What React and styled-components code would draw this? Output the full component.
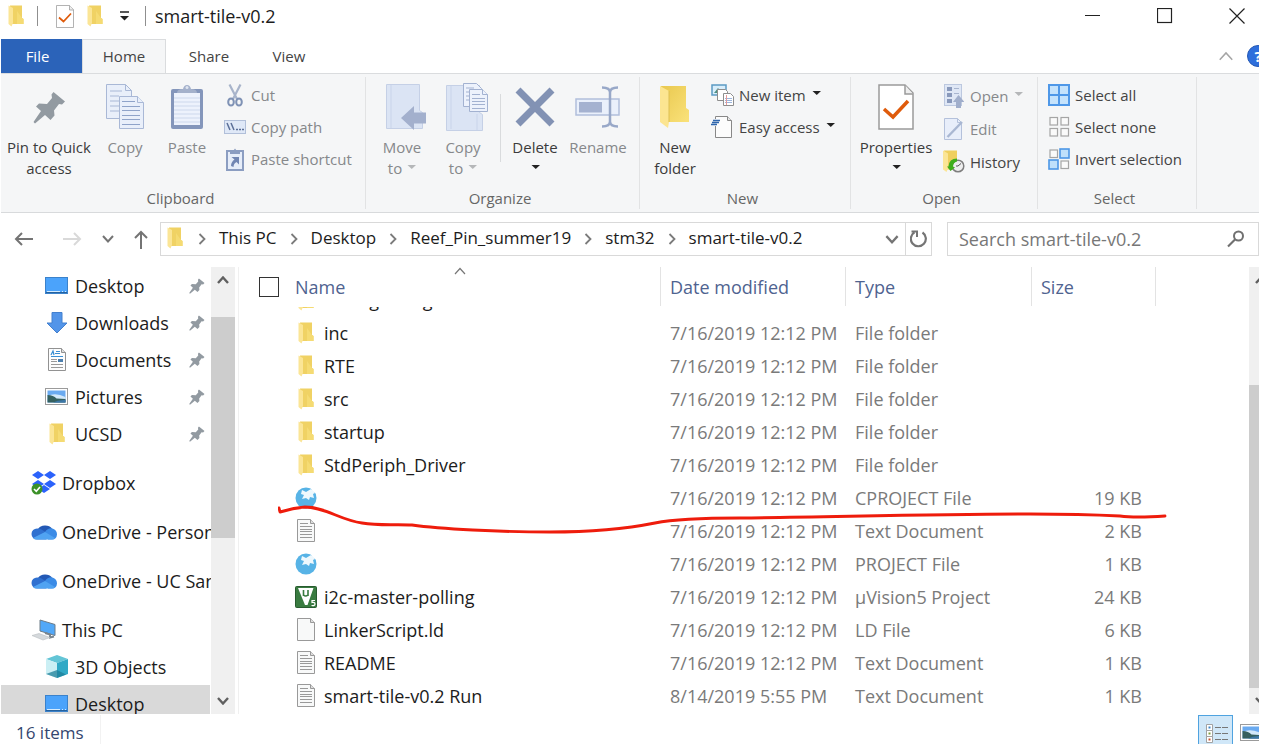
import React from 'react';
import styled, { createGlobalStyle, css } from 'styled-components';

const GlobalStyle = createGlobalStyle`
  *, *::before, *::after { box-sizing: border-box; }
  body { margin: 0; background: #fff; }
  body, button, input { font-family: "Open Sans", "Noto Sans", sans-serif; }
  button { border: 0; padding: 0; background: none; color: inherit; font-size: inherit; }
  svg { display: block; flex: none; }
`;

const dim = '#86888b';

/* ---------- window frame ---------- */

const Window = styled.div`
  display: flex;
  flex-direction: column;
  height: 100vh;
  padding: 0 4px 0 1px;
  overflow: hidden;
  font-size: 18px;
  color: #1c1c1c;
`;

const TitleBar = styled.header`
  display: flex;
  align-items: center;
  flex: none;
  height: 39px;
  padding: 0 14px 7px 7px;
`;

const QuickTools = styled.div`
  display: flex;
  align-items: center;
  gap: 13px;
`;

const QuickDivider = styled.span`
  width: 1px;
  height: 20px;
  margin-right: ${(p) => (p.$wide ? 5 : 0)}px;
  background: #8f8f8f;
`;

const Title = styled.h1`
  flex: 1;
  margin: 0 0 0 9px;
  font-size: 18px;
  line-height: 24px;
  font-weight: 400;
`;

const WindowControls = styled.div`
  display: flex;
  gap: 56px;
`;

const TabBar = styled.nav`
  display: flex;
  flex: none;
  height: 35px;
  border-bottom: 1px solid #dadcde;
  overflow: hidden;
`;

const Tab = styled.button`
  width: ${(p) => p.$width}px;
  height: 35px;
  padding-bottom: 2px;
  font-size: 15px;
  line-height: 32px;
  color: #444;
  ${(p) => p.$file && css`
    padding-right: 8px;
    background: #2b63b9;
    color: #fff;
  `}
  ${(p) => p.$active && css`
    background: #f5f6f7;
    border: 1px solid #dadcde;
    border-bottom: 0;
  `}
`;

const TabTools = styled.div`
  display: flex;
  align-items: center;
  gap: 13px;
  margin-left: auto;
  width: 41px;
  overflow: hidden;
`;

const HelpButton = styled.button`
  flex: none;
  width: 22px;
  height: 22px;
  border-radius: 50%;
  border: 1px solid #2458b4;
  background: #2f6fdc;
  color: #fff;
  font-size: 15px;
  line-height: 20px;
  font-weight: 700;
`;

/* ---------- ribbon ---------- */

const Ribbon = styled.div`
  display: flex;
  flex: none;
  height: 139px;
  padding: 3px 0;
  background: #f5f6f7;
  border-bottom: 1px solid #d8dadc;
  font-size: 15px;
  color: #444;
`;

const Group = styled.section`
  display: flex;
  flex-direction: column;
  flex: none;
  width: ${(p) => p.$width}px;
  border-right: 1px solid #e2e3e4;
`;

const GroupBody = styled.div`
  display: flex;
  flex: 1;
`;

const GroupLabel = styled.h2`
  margin: 0;
  padding-right: 5px;
  font-size: 15px;
  font-weight: 400;
  line-height: 22px;
  text-align: center;
  color: #666;
`;

const LargeButton = styled.button`
  display: flex;
  flex-direction: column;
  align-items: center;
  flex: none;
  width: ${(p) => p.$width}px;
  padding-top: 5px;
  line-height: 21px;
  white-space: nowrap;
  color: ${(p) => (p.$dim ? dim : '#3b3b3b')};
`;

const LargeIcon = styled.span`
  display: flex;
  align-items: center;
  height: 50px;
  margin-bottom: 5px;
`;

const LabelLine = styled.span`
  display: flex;
  align-items: center;
  gap: 4px;
  height: 21px;
`;

const SmallColumn = styled.div`
  display: flex;
  flex-direction: column;
  padding: 2px 0 0 ${(p) => p.$inset}px;
`;

const SmallButton = styled.button`
  display: flex;
  align-items: center;
  gap: 5px;
  height: ${(p) => p.$height || 32}px;
  line-height: 20px;
  white-space: nowrap;
  color: ${(p) => (p.$dim ? dim : '#444')};
`;

const SmallIcon = styled.span`
  display: flex;
  justify-content: center;
  width: ${(p) => p.$width || 22}px;
`;

const BodyDivider = styled.span`
  width: 1px;
  height: 68px;
  margin: 17px 0 0 12px;
  background: #d9dbdd;
`;

/* ---------- address row ---------- */

const AddressRow = styled.div`
  display: flex;
  align-items: center;
  flex: none;
  height: 54px;
  padding-bottom: 2px;
`;

const NavButtons = styled.div`
  display: flex;
  align-items: center;
  gap: 20px;
  width: 134px;
  margin: 0 12px 0 13px;
`;

const NavButton = styled.button`
  margin-left: ${(p) => (p.$apart ? 8 : 0)}px;
`;

const AddressBox = styled.div`
  display: flex;
  flex: 1;
  height: 34px;
  border: 1px solid #d9d9d9;
`;

const Crumbs = styled.div`
  display: flex;
  align-items: center;
  flex: 1;
  padding: 0 5px 2px 6px;
  white-space: nowrap;
`;

const CrumbFolder = styled.span`
  width: 18px;
`;

const Crumb = styled.button`
  font-size: 17px;
  line-height: 24px;
`;

const CrumbArrow = styled.span`
  display: flex;
  justify-content: center;
  width: 34px;
  padding-top: 2px;
`;

const AddressButton = styled.button`
  display: flex;
  align-items: center;
  justify-content: center;
  width: 26px;
  border-left: ${(p) => (p.$divided ? '1px solid #d9d9d9' : '0')};
`;

const SearchBox = styled.label`
  display: flex;
  align-items: center;
  width: 312px;
  height: 34px;
  margin-left: 15px;
  padding: 0 13px 0 11px;
  border: 1px solid #d9d9d9;
`;

const SearchInput = styled.input`
  flex: 1;
  min-width: 0;
  padding: 0;
  border: 0;
  outline: 0;
  font-size: 18px;
  &::placeholder { color: #777; opacity: 1; }
`;

/* ---------- navigation pane ---------- */

const Body = styled.div`
  display: flex;
  flex: 1;
  min-height: 0;
`;

const Sidebar = styled.aside`
  display: flex;
  flex: none;
  width: 238px;
  border-right: 1px solid #f0f0f0;
`;

const Tree = styled.ul`
  width: 210px;
  margin: 0;
  padding: 0 1px 0 0;
  list-style: none;
  overflow: hidden;
`;

const TreeRow = styled.li`
  display: flex;
  align-items: center;
  height: 37px;
  margin-top: ${(p) => (p.$spaced ? 12 : 0)}px;
  padding-left: ${(p) => (p.$nested ? 44 : 30)}px;
  padding-right: 5px;
  background: ${(p) => (p.$selected ? '#d9d9d9' : 'transparent')};
`;

const TreeIcon = styled.span`
  display: flex;
  justify-content: center;
  width: ${(p) => (p.$nested ? 23 : 26)}px;
`;

const TreeLabel = styled.a`
  flex: 1;
  margin-left: ${(p) => (p.$nested ? 7 : 5)}px;
  font-size: 18px;
  line-height: 24px;
  color: inherit;
  text-decoration: none;
  white-space: nowrap;
`;

const ScrollTrack = styled.div`
  display: flex;
  flex-direction: column;
  flex: none;
  width: ${(p) => p.$width}px;
  background: #f0f0f0;
  overflow: hidden;
`;

const ScrollButton = styled.button`
  display: flex;
  align-items: center;
  justify-content: center;
  flex: none;
  width: 24px;
  height: 26px;
`;

const ScrollThumb = styled.div`
  flex: ${(p) => p.$size} 0 0;
  background: #cdcdcd;
`;

const ScrollSpace = styled.div`
  flex: ${(p) => p.$size} 0 0;
`;

/* ---------- file list ---------- */

const FilePane = styled.main`
  position: relative;
  display: flex;
  flex: 1;
  min-width: 0;
`;

const FileTable = styled.table`
  display: flex;
  flex-direction: column;
  flex: 1;
  min-width: 0;
`;

const columns = css`
  display: grid;
  grid-template-columns: minmax(0, 1fr) 185px 186px 124px 93px;
`;

const HeadRow = styled.tr`
  ${columns}
  height: 40px;
`;

const HeadCell = styled.th`
  position: relative;
  display: flex;
  align-items: center;
  gap: 16px;
  height: 39px;
  padding: 1px 0 0 ${(p) => (p.$name ? 20 : 9)}px;
  border-right: 1px solid #e3e3e3;
  font-size: 18px;
  font-weight: 400;
  color: #4f6390;
`;

const CheckAll = styled.input`
  appearance: none;
  width: 20px;
  height: 20px;
  margin: 0;
  border: 1px solid #333;
  background: #fff;
`;

const SortMark = styled.span`
  position: absolute;
  top: 0;
  left: 51%;
`;

const FileRows = styled.tbody`
  display: flex;
  flex-direction: column;
  justify-content: flex-end;
  flex: 1;
  min-height: 0;
  padding-bottom: 1px;
  overflow: hidden;
`;

const FileRow = styled.tr`
  ${columns}
  flex: none;
  height: 33px;
`;

const Cell = styled.td`
  padding: 0 ${(p) => (p.$right ? 14 : 0)}px 0 9px;
  font-size: 18px;
  line-height: 33px;
  color: #7a7a7a;
  text-align: ${(p) => (p.$right ? 'right' : 'left')};
  white-space: nowrap;
`;

const NameCell = styled.td`
  display: flex;
  align-items: center;
  gap: 7px;
  padding: 0 0 0 56px;
  font-size: 18px;
  line-height: 33px;
  white-space: nowrap;
`;

const FileIcon = styled.span`
  display: flex;
  justify-content: center;
  width: 22px;
  padding-bottom: 2px;
`;

const PenStroke = styled.svg`
  position: absolute;
  top: 233px;
  left: 39px;
  pointer-events: none;
`;

/* ---------- status bar ---------- */

const StatusBar = styled.footer`
  display: flex;
  flex: none;
  height: 30px;
  padding: 1px 0 0 15px;
  overflow: hidden;
`;

const ItemCount = styled.span`
  width: 85px;
  height: 34px;
  border-right: 1px solid #f2f2f2;
  font-size: 17px;
  line-height: 35px;
  color: #34466f;
`;

const ViewButtons = styled.div`
  display: flex;
  margin-left: auto;
  width: 61px;
  overflow: hidden;
`;

const ViewButton = styled.button`
  flex: none;
  width: 35px;
  height: 35px;
  padding: 6px;
  border: 1px solid ${(p) => (p.$on ? '#4fa3e0' : 'transparent')};
  background: ${(p) => (p.$on ? '#d0e7f8' : 'transparent')};
`;

/* ---------- icons ---------- */

const Folder = ({ w = 16, h = 22 }) => (
  <svg width={w} height={h} viewBox="0 0 16 22">
    <path d="M2 0.5h12v12.500l1.500 1v5H3z" fill="#f0d264" />
    <path d="M14 13l1.500 1v5H9V6z" fill="#f5db73" />
    <path d="M0.500 0.500L5 3v15l-1.500 3.500L0.500 19z" fill="#fbe596" />
  </svg>
);

const BigFolder = () => (
  <svg width="32" height="44" viewBox="0 0 32 44">
    <defs>
      <linearGradient id="bigFolder" x1="0" y1="0" x2="1" y2="1">
        <stop offset="0" stopColor="#e9c84f" />
        <stop offset="1" stopColor="#fae27a" />
      </linearGradient>
    </defs>
    <path d="M2 1h25v22l3 2v12H8z" fill="url(#bigFolder)" />
    <path d="M1 1l9 5v31l-1 6-8-6z" fill="#fce591" />
    <path d="M10 6v31" stroke="#dfc052" />
  </svg>
);

const Pin = ({ size = 33, color = '#929aa1' }) => (
  <svg width={size} height={size} viewBox="0 0 33 33">
    <path d="M20.500 1L32 10.500 29 13.500l-3-.5-5 6.500.5 5-4 4.500-5.500-5L2 32.500.5 31 8 20l-5-4.500L6 12.500l8 .5 5-6-.5-3.500z" fill={color} />
  </svg>
);

const Caret = ({ color = '#222' }) => (
  <svg width="10" height="8" viewBox="0 0 10 8"><path d="M1.500 0h8.500L5.750 4z" fill={color} /></svg>
);

const Chevron = ({ w = 12, h = 8, dir = 'down', color = '#606060', stroke = 2 }) => {
  const paths = { down: 'M1 1l5 5.500 5-5.500', up: 'M1 7l5-5.500L11 7' };
  return (
    <svg width={w} height={h} viewBox="0 0 12 8">
      <path d={paths[dir]} fill="none" stroke={color} strokeWidth={stroke} />
    </svg>
  );
};

const RightChevron = () => (
  <svg width="8" height="12" viewBox="0 0 8 12">
    <path d="M1.500 1l5 5-5 5" fill="none" stroke="#7b7b7b" strokeWidth="1.800" />
  </svg>
);

const CheckDoc = ({ w, h }) => (
  <svg width={w} height={h} viewBox="0 0 36 46">
    <path d="M1 1h26l8 8v36H1z" fill="#fff" stroke="#9a9a9a" strokeWidth="1.500" />
    <path d="M27 1v9h8" fill="#eee" stroke="#9a9a9a" strokeWidth="1.500" />
    <path d="M6 25l9 8 15-16" fill="none" stroke="#df5b0b" strokeWidth="3.500" />
  </svg>
);

const CopyIcon = () => (
  <svg width="38" height="46" viewBox="0 0 38 46" fill="#e9effa" stroke="#a9b8d6">
    <path d="M.5.5h19l6 6v28H.5z" />
    <path d="M19.500.5v6h6M4 7h12M4 12h9M4 17h9M4 22h9M4 27h9" fill="none" />
    <path d="M13.500 12.500h18l6 6v26h-24z" />
    <path d="M31.500 12.500v6h6" />
    <path d="M16 17.500h13M16 22.500h18M16 26.500h18M16 31.500h18M16 35.500h18M16 40.500h18" stroke="#8fa3c9" />
  </svg>
);

const PasteIcon = () => (
  <svg width="34" height="46" viewBox="0 0 34 46">
    <rect x="1" y="5" width="32" height="40" rx="2" fill="#8496bb" />
    <rect x="4" y="9" width="26" height="32" fill="#edf2fc" />
    <path d="M4 14h26M4 18h26M4 22h26M4 26h26M4 30h26M4 34h26M4 38h26" stroke="#cdd8ec" />
    <path d="M7 9q0-4 6-4 1-4 4-4t4 4q6 0 6 4z" fill="#a4b1cb" />
    <circle cx="17" cy="3.500" r="1.500" fill="#dfe5f0" />
  </svg>
);

const CutIcon = () => (
  <svg width="16" height="23" viewBox="0 0 16 23" fill="none">
    <path d="M2.500.5L10 15M13.500.5L6 15" stroke="#a8b4ca" strokeWidth="2.200" />
    <ellipse cx="4" cy="18" rx="2.800" ry="3.600" stroke="#7f92b5" strokeWidth="2" />
    <ellipse cx="12" cy="18" rx="2.800" ry="3.600" stroke="#7f92b5" strokeWidth="2" />
  </svg>
);

const CopyPathIcon = () => (
  <svg width="22" height="14" viewBox="0 0 22 14">
    <rect x=".5" y=".5" width="21" height="13" fill="#dfe8f7" stroke="#b1bfd9" />
    <path d="M3 3l3 7M7 3l3 7" stroke="#5b6f98" strokeWidth="1.500" />
    <path d="M12 9.500h2M15 9.500h2M18 9.500h2" stroke="#5b6f98" strokeWidth="1.500" />
  </svg>
);

const PasteShortcutIcon = () => (
  <svg width="18" height="23" viewBox="0 0 18 23">
    <rect x="1" y="3" width="16" height="19" fill="#e6edf9" stroke="#8b9dc1" strokeWidth="2" />
    <path d="M4 6V3l3.500-.5L9 .5l1.500 2 3.500.5v3z" fill="#8b9dc1" />
    <path d="M5.500 9h7.500v7.500l-2.500-2.500q-3 1.500-3 5l-2.500-1q0-4 3.500-6.500z" fill="#7186b3" />
  </svg>
);

const MoveIcon = () => (
  <svg width="48" height="46" viewBox="-8 0 48 46">
    <path d="M.5.5h33v26l3 2v16H.5z" fill="#dbe4f4" stroke="#c5d0e6" />
    <path d="M5 1v43" stroke="#c9d4ea" />
    <path d="M40 28.500v11H28V46L15 34l13-12v6.500z" fill="#a3b0cd" />
  </svg>
);

const CopyToIcon = () => (
  <svg width="50" height="48" viewBox="-8 0 50 48">
    <path d="M.5 2.500h33v27l3 2v16H.5z" fill="#dbe4f4" stroke="#c5d0e6" />
    <path d="M5 3v43M31 31v16" stroke="#c9d4ea" />
    <g fill="#edf2fc" stroke="#a3b2d1">
      <path d="M17.500.5h13l5 5v18h-18z" />
      <path d="M20 5h8M20 9h4M20 13h4M20 17h4" />
      <path d="M23.500 6.500h13l5 5v17h-18z" />
      <path d="M36.500 6.500v5h5M26 11.500h8M26 15.500h13M26 18.500h13M26 21.500h13M26 25.500h13" />
    </g>
  </svg>
);

const DeleteIcon = () => (
  <svg width="40" height="40" viewBox="0 0 40 40">
    <path d="M3 3l34 34M37 3L3 37" stroke="#8292b4" strokeWidth="7" />
  </svg>
);

const RenameIcon = () => (
  <svg width="46" height="42" viewBox="0 0 46 42" fill="none">
    <rect x="1" y="13" width="43" height="16" fill="#eaf0fb" stroke="#b1bfdb" strokeWidth="1.500" />
    <rect x="4" y="16" width="23" height="10.500" fill="#a5b2d0" />
    <path d="M35 5v32M27 1.500q8 0 8 5 0-5 8-5M27 40.500q8 0 8-5 0 5 8 5" stroke="#98a8c8" strokeWidth="2.500" />
  </svg>
);

const NewItemIcon = () => (
  <svg width="23" height="22" viewBox="0 0 23 22">
    <rect x="1" y="1" width="14" height="10" fill="#d9eefb" stroke="#5b9ac4" strokeWidth="1.500" />
    <path d="M3 9l4-5 4 5z" fill="#4d9183" />
    <path d="M6.500 5.500h8l2 2v9h-10z" fill="#fff" stroke="#8e8e8e" />
    <path d="M12.500 9.500h7l3 3v9h-10z" fill="#fff" stroke="#8e8e8e" />
    <path d="M14 14.500h7M14 16.500h7M14 18.500h7" stroke="#9db6dd" />
    <path d="M15.500 11v10" stroke="#e59a9a" />
  </svg>
);

const EasyAccessIcon = () => (
  <svg width="23" height="22" viewBox="0 0 23 22">
    <path d="M4.500.5h12l4 4v17h-16z" fill="#fcfcfc" stroke="#888" />
    <path d="M16.500.5v4h4" fill="#e6e6e6" stroke="#888" />
    <path d="M4 3v7" stroke="#f5f6f7" strokeWidth="2" />
    <path d="M2 4.500h7M1 6.500h7M0 8.500h6" stroke="#2f66ad" strokeWidth="1.400" />
  </svg>
);

const OpenIcon = () => (
  <svg width="20" height="24" viewBox="0 0 20 24">
    <rect x=".5" y=".5" width="17" height="21" fill="#dfe7f5" stroke="#bcc8df" />
    <path d="M3 3h5v4H3zM3 9h5v4H3zM3 15h5v4H3z" fill="#8999bb" />
    <path d="M10 4.500h5M10 9.500h5" stroke="#a8b5cf" />
    <path d="M14.500 11l6 7H17v6h-5v-6H9z" fill="#a0aecb" />
  </svg>
);

const EditIcon = () => (
  <svg width="20" height="22" viewBox="0 0 20 22">
    <path d="M.5.5h13l4 4v17H.5z" fill="#e8eefa" stroke="#b4c1db" />
    <path d="M13.500.5v4h4" fill="none" stroke="#b4c1db" />
    <path d="M3.500 19L18 4" stroke="#a9b7d2" strokeWidth="2.400" />
  </svg>
);

const HistoryIcon = () => (
  <svg width="22" height="23" viewBox="0 0 22 23">
    <path d="M1 .5h13v19H4z" fill="#efcf5f" />
    <path d="M0 .5l5 3v15L3.500 22 0 19.500z" fill="#fbe596" />
    <circle cx="15" cy="16" r="5.800" fill="#eee" stroke="#7e7e7e" strokeWidth="1.500" />
    <path d="M15 16l3-2.500M15 16h-2" stroke="#555" />
    <path d="M14 8.500q-8 0-8.500 8H4l3.500 4.500 4.500-3.500-2-1q0-4 4-5z" fill="#3fae1b" />
  </svg>
);

const Tile = ({ x, y, on, s = 8 }) => (
  <rect x={x} y={y} width={s} height={s} fill={on ? '#bfe0fb' : '#fafafa'} stroke={on ? '#4d97e6' : '#a5a5a5'} strokeWidth={on ? 1.6 : 1.2} />
);

const SelectAllIcon = () => (
  <svg width="22" height="22" viewBox="0 0 22 22">
    <rect width="22" height="22" fill="#4f98e8" />
    <path d="M2 2h8v8H2zM12 2h8v8h-8zM2 12h8v8H2zM12 12h8v8h-8z" fill="#c5e3fc" />
  </svg>
);

const SelectNoneIcon = () => (
  <svg width="22" height="22" viewBox="0 0 22 22">
    <Tile x={2} y={1.5} s={7.5} /><Tile x={13} y={1.5} s={7.5} />
    <Tile x={2} y={12.5} s={7.5} /><Tile x={13} y={12.5} s={7.5} />
  </svg>
);

const InvertIcon = () => (
  <svg width="22" height="22" viewBox="0 0 22 22">
    <Tile x={2} y={2} s={7.5} /><Tile x={12} y={1} on s={9} />
    <Tile x={1} y={12} on s={9} /><Tile x={13} y={13} s={7.5} />
  </svg>
);

const DesktopIcon = () => (
  <svg width="23" height="17" viewBox="0 0 23 17">
    <rect x=".5" y=".5" width="22" height="16" fill="#4ba3fb" stroke="#3b82cb" />
    <path d="M2 14.500h13M17 14.500h1M20 14.500h1" stroke="#d5ecff" />
    <path d="M1 15.500h21" stroke="#26629e" />
  </svg>
);

const DownloadIcon = () => (
  <svg width="22" height="22" viewBox="0 0 22 22">
    <path d="M6 .5h10V11h5L11 21 1 11h5z" fill="#5395e9" stroke="#4380cf" />
  </svg>
);

const DocumentsIcon = () => (
  <svg width="18" height="23" viewBox="0 0 18 23">
    <path d="M.5.5h13l4 4v18H.5z" fill="#fdfdfd" stroke="#929292" />
    <path d="M13.500.5v4h4" fill="#ddd" stroke="#929292" />
    <path d="M3 7l2-4 1 4M8 3.500h4M7 5.500h5M3 8.500h12" fill="none" stroke="#3a8fd4" strokeWidth="1.200" />
    <path d="M3 11.500h6M3 13.500h6M3 16.500h12M3 19.500h12" stroke="#999" />
    <path d="M10 11h5v3h-5z" fill="#4c7fae" />
  </svg>
);

const PictureIcon = () => (
  <svg width="23" height="17" viewBox="0 0 23 17">
    <rect x=".5" y=".5" width="22" height="16" fill="#fff" stroke="#9b9b9b" />
    <rect x="2.500" y="2.500" width="18" height="12" fill="#6aaaf0" />
    <path d="M2.500 8q8-4 18 1v2h-18z" fill="#d2e8fa" />
    <path d="M2.500 7q6 0 9 3.500l9 .5v3.500h-18z" fill="#35605f" />
    <path d="M8 14.500q5-3 12.500-2.500v2.500z" fill="#3c77a8" />
  </svg>
);

const DropboxIcon = () => (
  <svg width="26" height="24" viewBox="0 0 26 24">
    <path d="M7 0l6 4-6 4-6-4zM19 0l6 4-6 4-6-4zM7 9l6 4-6 4-6-4zM19 9l6 4-6 4-6-4zM13 14l6 4-6 4-6-4z" fill="#2b62fb" />
    <circle cx="6" cy="18" r="5.500" fill="#3c9128" />
    <path d="M3 18l2.300 2.300L9 16" fill="none" stroke="#fff" strokeWidth="1.600" />
  </svg>
);

const OneDriveIcon = () => (
  <svg width="26" height="17" viewBox="0 0 26 17">
    <path d="M7 6a8 6.500 0 0 1 14-.5L15 11z" fill="#2359b5" />
    <path d="M6 16.500A5.500 5.500 0 0 1 6 5.500q3 0 4.500 1L21 13l-6 3.500z" fill="#2f70d0" />
    <path d="M14 9q3-4.500 7.500-3.500Q26 7 26 11.500 25.500 16.500 21 16.500h-4z" fill="#3b8be6" />
    <path d="M2 15l12-6 10 6q-1 1.500-3 1.500H6q-2.500 0-4-1.500z" fill="#50a3f2" />
  </svg>
);

const ComputerIcon = () => (
  <svg width="26" height="22" viewBox="0 0 26 22">
    <path d="M9 1l15 4.500v11L9 12z" fill="#52a8f8" stroke="#6d7c88" />
    <path d="M14 14l5 1.500v3l4-1" fill="none" stroke="#79858e" strokeWidth="2" />
    <path d="M1 16.500l7-2 11 4-7 2.500z" fill="#d5d9dc" stroke="#b8bdc1" strokeWidth=".6" />
  </svg>
);

const CubeIcon = () => (
  <svg width="24" height="23" viewBox="0 0 24 23">
    <path d="M1 4l11-4 11 4-11 4z" fill="#63c5d6" />
    <path d="M1 4l11 4v15L1 19z" fill="#cbeff4" />
    <path d="M23 4L12 8v15l11-4z" fill="#31a9c6" />
    <path d="M12 15l-11 4 11 4 9-3.500z" fill="#1d7f98" opacity=".75" />
  </svg>
);

const GlobeIcon = () => (
  <svg width="22" height="22" viewBox="0 0 22 22">
    <circle cx="11" cy="11" r="10.500" fill="#57b3e6" />
    <path d="M7 3l4 2 5-3 4 4-2 1 1 4-4-1-1 3-3-2-4 1 2-4-3-1z" fill="#eef8fd" />
    <path d="M17 2l3 3" stroke="#fff" strokeWidth="2" />
  </svg>
);

const Sheet = ({ lined }) => (
  <svg width="18" height="23" viewBox="0 0 18 23">
    <path d="M.5.5h13l4 4v18H.5z" fill="#f8f9f9" stroke="#999" />
    <path d="M13.500.5v4h4" fill="#ddd" stroke="#999" />
    {lined && <path d="M3 4.500h8M3 7.500h12M3 10.500h12M3 12.500h12M3 15.500h12M3 18.500h12" stroke="#999" />}
  </svg>
);

const VisionIcon = () => (
  <svg width="22" height="22" viewBox="0 0 22 22">
    <rect x=".5" y=".5" width="21" height="21" rx="1" fill="#397b40" stroke="#285b2f" />
    <path d="M3 2h15.500L12.500 19h-2.500z" fill="#fff" />
    <path d="M8.500 4v6M8.500 9q2 2 4.500 0M13 4v6" fill="none" stroke="#397b40" strokeWidth="1.600" />
    <path d="M20 14.500h-3v2q3-.5 3 1.500t-3.500 1.500" fill="none" stroke="#fff" strokeWidth="1.200" />
  </svg>
);

const Arrow = ({ forward }) => (
  <svg width="20" height="14" viewBox="0 0 20 14">
    <path
      d={forward ? 'M1 7h17M12 1l6 6-6 6' : 'M19 7H2M8 1L2 7l6 6'}
      fill="none" stroke={forward ? '#d9d9d9' : '#747474'} strokeWidth="2"
    />
  </svg>
);

const UpArrow = () => (
  <svg width="14" height="19" viewBox="0 0 14 19">
    <path d="M7 19V2M1 8l6-6 6 6" fill="none" stroke="#747474" strokeWidth="2" />
  </svg>
);

const RefreshIcon = () => (
  <svg width="18" height="18" viewBox="0 0 18 18">
    <path d="M12.500 2.500a7.500 7.500 0 1 1-8-.2" fill="none" stroke="#757575" strokeWidth="2.200" />
    <path d="M1.500 1.500H7V7" fill="none" stroke="#757575" strokeWidth="2" />
  </svg>
);

const SearchIcon = () => (
  <svg width="18" height="18" viewBox="0 0 18 18">
    <circle cx="11.500" cy="6" r="4.500" fill="none" stroke="#707070" strokeWidth="2" />
    <path d="M8.500 9L1 16.500" stroke="#707070" strokeWidth="2.200" />
  </svg>
);

const DetailsIcon = () => (
  <svg width="24" height="22" viewBox="0 0 24 22">
    <path d="M1.500 2.500h6v6h-6zM1.500 8.500h6v6h-6zM1.500 14.500h6v6h-6z" fill="#fff" stroke="#a2a2a2" />
    <path d="M3.500 4.500h2v2h-2z" fill="#3a85c9" />
    <path d="M3.500 10.500h2v2h-2z" fill="#7d9a3a" />
    <path d="M3.500 16.500h2v2h-2z" fill="#c9502c" />
    <path d="M10 5.500h6M17 5.500h6M10 11.500h6M17 11.500h6M10 17.500h6M17 17.500h6" stroke="#777" />
  </svg>
);

/* ---------- data ---------- */

const tabs = [
  { label: 'File', width: 81, file: true },
  { label: 'Home', width: 84, active: true },
  { label: 'Share', width: 86 },
  { label: 'View', width: 74 },
];

const crumbs = ['This PC', 'Desktop', 'Reef_Pin_summer19', 'stm32', 'smart-tile-v0.2'];

const tree = [
  { label: 'Desktop', icon: <DesktopIcon />, nested: true, pinned: true },
  { label: 'Downloads', icon: <DownloadIcon />, nested: true, pinned: true },
  { label: 'Documents', icon: <DocumentsIcon />, nested: true, pinned: true },
  { label: 'Pictures', icon: <PictureIcon />, nested: true, pinned: true },
  { label: 'UCSD', icon: <Folder />, nested: true, pinned: true },
  { label: 'Dropbox', icon: <DropboxIcon />, spaced: true },
  { label: 'OneDrive - Personal', icon: <OneDriveIcon />, spaced: true },
  { label: 'OneDrive - UC San Diego', icon: <OneDriveIcon />, spaced: true },
  { label: 'This PC', icon: <ComputerIcon />, spaced: true },
  { label: '3D Objects', icon: <CubeIcon />, nested: true },
  { label: 'Desktop', icon: <DesktopIcon />, nested: true, selected: true },
];

const noon = '7/16/2019 12:12 PM';

const files = [
  { name: 'DebugConfig', icon: <Folder />, date: noon, type: 'File folder' },
  { name: 'inc', icon: <Folder />, date: noon, type: 'File folder' },
  { name: 'RTE', icon: <Folder />, date: noon, type: 'File folder' },
  { name: 'src', icon: <Folder />, date: noon, type: 'File folder' },
  { name: 'startup', icon: <Folder />, date: noon, type: 'File folder' },
  { name: 'StdPeriph_Driver', icon: <Folder />, date: noon, type: 'File folder' },
  { name: '', icon: <GlobeIcon />, date: noon, type: 'CPROJECT File', size: '19 KB' },
  { name: '', icon: <Sheet lined />, date: noon, type: 'Text Document', size: '2 KB' },
  { name: '', icon: <GlobeIcon />, date: noon, type: 'PROJECT File', size: '1 KB' },
  { name: 'i2c-master-polling', icon: <VisionIcon />, date: noon, type: 'µVision5 Project', size: '24 KB' },
  { name: 'LinkerScript.ld', icon: <Sheet />, date: noon, type: 'LD File', size: '6 KB' },
  { name: 'README', icon: <Sheet lined />, date: noon, type: 'Text Document', size: '1 KB' },
  { name: 'smart-tile-v0.2 Run', icon: <Sheet lined />, date: '8/14/2019 5:55 PM', type: 'Text Document', size: '1 KB' },
];

/* ---------- parts ---------- */

const Large = ({ icon, lines, width, dim: isDim, caret }) => (
  <LargeButton $width={width} $dim={isDim}>
    <LargeIcon>{icon}</LargeIcon>
    {lines.map((line, i) => (
      <LabelLine key={line || i}>
        {line}
        {caret && i === lines.length - 1 && <Caret color={isDim ? '#b5b7b9' : '#222'} />}
      </LabelLine>
    ))}
  </LargeButton>
);

const Small = ({ icon, label, dim: isDim, caret, height, iconWidth }) => (
  <SmallButton $dim={isDim} $height={height}>
    <SmallIcon $width={iconWidth}>{icon}</SmallIcon>
    {label}
    {caret && <Caret color={isDim ? '#b5b7b9' : '#222'} />}
  </SmallButton>
);

const Scrollbar = ({ width, before, thumb, after }) => (
  <ScrollTrack $width={width}>
    <ScrollButton aria-label="Scroll up"><Chevron dir="up" stroke={2.4} /></ScrollButton>
    <ScrollSpace $size={before} />
    <ScrollThumb $size={thumb} />
    <ScrollSpace $size={after} />
    <ScrollButton aria-label="Scroll down"><Chevron stroke={2.4} /></ScrollButton>
  </ScrollTrack>
);

export default function App() {
  return (
    <Window>
      <GlobalStyle />
      <TitleBar>
        <QuickTools>
          <Folder />
          <QuickDivider $wide />
          <button aria-label="Properties"><CheckDoc w={18} h={23} /></button>
          <button aria-label="New folder"><Folder /></button>
          <button aria-label="Customize Quick Access Toolbar">
            <svg width="16" height="10" viewBox="0 0 16 10">
              <path d="M4 1h9" stroke="#222" strokeWidth="1.500" />
              <path d="M4 5h9L8.500 9.500z" fill="#222" />
            </svg>
          </button>
          <QuickDivider />
        </QuickTools>
        <Title>smart-tile-v0.2</Title>
        <WindowControls>
          <button aria-label="Minimize">
            <svg width="16" height="16" viewBox="0 0 16 16"><path d="M0 7.500h15" stroke="#222" /></svg>
          </button>
          <button aria-label="Maximize">
            <svg width="16" height="16" viewBox="0 0 16 16"><rect x=".5" y=".5" width="14" height="14" fill="none" stroke="#222" strokeWidth="1.200" /></svg>
          </button>
          <button aria-label="Close">
            <svg width="16" height="16" viewBox="0 0 16 16"><path d="M.5.5l15 15M15.500.5l-15 15" stroke="#222" strokeWidth="1.200" /></svg>
          </button>
        </WindowControls>
      </TitleBar>

      <TabBar>
        {tabs.map((t) => (
          <Tab key={t.label} $width={t.width} $file={t.file} $active={t.active}>{t.label}</Tab>
        ))}
        <TabTools>
          <button aria-label="Minimize the ribbon"><Chevron w={16} h={10} dir="up" color="#a5a5a5" stroke={1.2} /></button>
          <HelpButton aria-label="Help">?</HelpButton>
        </TabTools>
      </TabBar>

      <Ribbon>
        <Group $width={365}>
          <GroupBody>
            <Large width={96} icon={<Pin />} lines={['Pin to Quick', 'access']} />
            <Large width={56} dim icon={<CopyIcon />} lines={['Copy']} />
            <Large width={68} dim icon={<PasteIcon />} lines={['Paste']} />
            <SmallColumn $inset={3}>
              <Small dim icon={<CutIcon />} label="Cut" />
              <Small dim icon={<CopyPathIcon />} label="Copy path" />
              <Small dim icon={<PasteShortcutIcon />} label="Paste shortcut" />
            </SmallColumn>
          </GroupBody>
          <GroupLabel>Clipboard</GroupLabel>
        </Group>
        <Group $width={274}>
          <GroupBody>
            <Large width={72} dim caret icon={<MoveIcon />} lines={['Move', 'to']} />
            <Large width={50} dim caret icon={<CopyToIcon />} lines={['Copy', 'to']} />
            <BodyDivider />
            <Large width={68} caret icon={<DeleteIcon />} lines={['Delete', '']} />
            <Large width={58} dim icon={<RenameIcon />} lines={['Rename']} />
          </GroupBody>
          <GroupLabel>Organize</GroupLabel>
        </Group>
        <Group $width={211}>
          <GroupBody>
            <Large width={70} icon={<BigFolder />} lines={['New', 'folder']} />
            <SmallColumn $inset={1}>
              <Small iconWidth={23} caret icon={<NewItemIcon />} label="New item" />
              <Small iconWidth={23} caret icon={<EasyAccessIcon />} label="Easy access" />
            </SmallColumn>
          </GroupBody>
          <GroupLabel>New</GroupLabel>
        </Group>
        <Group $width={187}>
          <GroupBody>
            <Large width={90} caret icon={<CheckDoc w={36} h={46} />} lines={['Properties', '']} />
            <SmallColumn $inset={2}>
              <Small height={33} dim caret icon={<OpenIcon />} label="Open" />
              <Small height={33} dim icon={<EditIcon />} label="Edit" />
              <Small height={33} icon={<HistoryIcon />} label="History" />
            </SmallColumn>
          </GroupBody>
          <GroupLabel>Open</GroupLabel>
        </Group>
        <Group $width={159}>
          <GroupBody>
            <SmallColumn $inset={10}>
              <Small icon={<SelectAllIcon />} label="Select all" />
              <Small icon={<SelectNoneIcon />} label="Select none" />
              <Small icon={<InvertIcon />} label="Invert selection" />
            </SmallColumn>
          </GroupBody>
          <GroupLabel>Select</GroupLabel>
        </Group>
      </Ribbon>

      <AddressRow>
        <NavButtons>
          <NavButton aria-label="Back"><Arrow /></NavButton>
          <NavButton $apart aria-label="Forward"><Arrow forward /></NavButton>
          <NavButton aria-label="Recent locations"><Chevron color="#747474" /></NavButton>
          <NavButton aria-label="Up"><UpArrow /></NavButton>
        </NavButtons>
        <AddressBox>
          <Crumbs>
            <CrumbFolder><Folder /></CrumbFolder>
            {crumbs.map((c) => (
              <React.Fragment key={c}>
                <CrumbArrow><RightChevron /></CrumbArrow>
                <Crumb>{c}</Crumb>
              </React.Fragment>
            ))}
          </Crumbs>
          <AddressButton aria-label="Previous locations">
            <Chevron w={14} h={9} color="#747474" />
          </AddressButton>
          <AddressButton $divided aria-label="Refresh"><RefreshIcon /></AddressButton>
        </AddressBox>
        <SearchBox>
          <SearchInput type="text" aria-label="Search" placeholder="Search smart-tile-v0.2" />
          <SearchIcon />
        </SearchBox>
      </AddressRow>

      <Body>
        <Sidebar>
          <Tree>
            {tree.map((n, i) => (
              <TreeRow key={i} $nested={n.nested} $spaced={n.spaced} $selected={n.selected}>
                <TreeIcon $nested={n.nested}>{n.icon}</TreeIcon>
                <TreeLabel href="#" $nested={n.nested}>{n.label}</TreeLabel>
                {n.pinned && <Pin size={16} />}
              </TreeRow>
            ))}
          </Tree>
          <Scrollbar width={24} before={24} thumb={221} after={150} />
        </Sidebar>

        <FilePane>
          <FileTable>
            <thead>
              <HeadRow>
                <HeadCell $name>
                  <CheckAll type="checkbox" aria-label="Select all items" />
                  Name
                  <SortMark><Chevron dir="up" color="#777" stroke={1.2} /></SortMark>
                </HeadCell>
                <HeadCell>Date modified</HeadCell>
                <HeadCell>Type</HeadCell>
                <HeadCell>Size</HeadCell>
              </HeadRow>
            </thead>
            <FileRows>
              {files.map((f, i) => (
                <FileRow key={i}>
                  <NameCell><FileIcon>{f.icon}</FileIcon>{f.name}</NameCell>
                  <Cell>{f.date}</Cell>
                  <Cell>{f.type}</Cell>
                  <Cell $right>{f.size}</Cell>
                </FileRow>
              ))}
            </FileRows>
          </FileTable>
          <Scrollbar width={10} before={92} thumb={303} after={0} />
          <PenStroke width="892" height="40" viewBox="278 500 892 40">
            <path
              d="M279 508L280 512Q293 508 305 507C325 507 340 520 362 523C380 526 395 524 412 525C440 529 500 532 550 532C595 532 630 528 655 523C675 519 700 518 740 518C830 517 940 514 1030 514C1080 514 1100 515 1120 516C1135 518 1150 517 1165 516"
              fill="none" stroke="#ee1c0c" strokeWidth="2.900" strokeLinecap="round" strokeLinejoin="round"
            />
          </PenStroke>
        </FilePane>
      </Body>

      <StatusBar>
        <ItemCount>16 items</ItemCount>
        <ViewButtons>
          <ViewButton $on aria-label="Details view"><DetailsIcon /></ViewButton>
          <ViewButton aria-label="Large icons view"><PictureIcon /></ViewButton>
        </ViewButtons>
      </StatusBar>
    </Window>
  );
}
